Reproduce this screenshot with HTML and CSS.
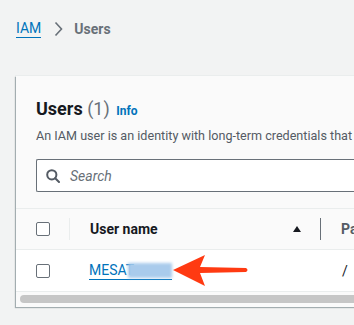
FILE: index.html
```html
<!DOCTYPE html>
<html lang="en">

<head>
    <meta charset="UTF-8">
    <meta name="viewport" content="width=device-width, initial-scale=1.0">
    <title>IAM - Users</title>
    <link rel="stylesheet" href="styles.css">
</head>

<body>
    <!-- 面包屑 -->
    <nav class="breadcrumb">
        <a class="crumb-link" href="#">IAM</a>
        <svg class="crumb-sep" width="9" height="16" viewBox="0 0 9 16">
            <path d="M1.5 1.5 L7.5 8 L1.5 14.5" fill="none" stroke="#687078" stroke-width="1.6" />
        </svg>
        <span class="crumb-current">Users</span>
    </nav>

    <div class="card">
        <div class="card-header">
            <h2>Users <span class="count">(1)</span> <a class="info" href="#">Info</a></h2>
            <p class="desc">An IAM user is an identity with long-term credentials that is used to interact with AWS in an account.</p>
            <div class="search">
                <svg width="14" height="14" viewBox="0 0 14 14">
                    <circle cx="5.8" cy="5.8" r="4.6" fill="none" stroke="#545b64" stroke-width="2" />
                    <path d="M9.2 9.2 L13 13" stroke="#545b64" stroke-width="2" stroke-linecap="round" />
                </svg>
                <span class="placeholder">Search</span>
            </div>
        </div>

        <div class="table">
            <div class="row head">
                <div class="cell check"><span class="box"></span></div>
                <div class="cell name sep-light">
                    <span>User name</span>
                    <svg width="8" height="6" viewBox="0 0 8 6"><path d="M0 6 L4 0 L8 6 Z" fill="#16191f" /></svg>
                </div>
                <div class="cell path sep-dark">Pa</div>
            </div>
            <div class="row body">
                <div class="cell check"><span class="box"></span></div>
                <div class="cell name">
                    <a class="user-link" href="#">MESAT<span class="blur"></span></a>
                </div>
                <div class="cell path">/</div>
            </div>
        </div>

        <div class="scroll"><div class="thumb"></div></div>
    </div>

    <!-- 红色箭头标注 -->
    <svg class="arrow" width="80" height="34" viewBox="0 0 80 34">
        <path d="M1 16 L33 1 L28 13 L74 14 Q77 16 74 18 L28 19 L33 32 Z" fill="#ff3a12" />
    </svg>
</body>

</html>
```

FILE: styles.css
```css
body {
    margin: 0;
    width: 354px;
    height: 325px;
    overflow: hidden;
    position: relative;
    font-family: Roboto, "Noto Sans", Arial, sans-serif;
    background-color: #f2f3f3;
    color: #16191f;
}

.breadcrumb {
    display: flex;
    align-items: center;
    gap: 11px;
    height: 20px;
    padding: 19px 16px 0;
    font-size: 14px;
}

.crumb-link {
    color: #0073bb;
    text-decoration: none;
    border-bottom: 1px solid #0073bb;
    line-height: 17px;
}

.crumb-sep {
    margin-left: 2px;
}

.crumb-current {
    color: #687078;
    font-weight: bold;
}

.card {
    margin: 37px 0 0 16px;
    width: 380px;
    background-color: #fafafa;
    box-shadow: -1px 1px 1px rgba(0, 28, 36, 0.3), 0 0 0 1px #eaeded;
    padding-bottom: 4px;
}

.card-header {
    padding: 21px 0 16px 20px;
}

h2 {
    margin: 0;
    font-size: 18px;
    line-height: 24px;
    font-weight: bold;
}

.count {
    color: #687078;
    font-weight: normal;
}

.info {
    margin-left: 2px;
    font-size: 12px;
    color: #0073bb;
    text-decoration: none;
}

.desc {
    margin: 5px 0 0;
    font-size: 12.6px;
    line-height: 16px;
    color: #545b64;
    white-space: nowrap;
}

.search {
    display: flex;
    align-items: center;
    gap: 10px;
    margin-top: 15px;
    height: 31px;
    padding-left: 9px;
    border: 1px solid #687078;
    border-right: none;
    border-radius: 2px 0 0 2px;
    background-color: #fff;
}

.placeholder {
    font-size: 14px;
    font-style: italic;
    color: #687078;
}

.row {
    display: grid;
    grid-template-columns: 33px 251px 100px;
    padding-left: 20px;
    border-top: 1px solid #eaeded;
    align-items: center;
}

.row.head {
    height: 40px;
    font-weight: bold;
    font-size: 14px;
}

.row.body {
    height: 41px;
    background-color: #fff;
    border-bottom: 1px solid #eaeded;
    font-size: 14px;
}

.cell {
    display: flex;
    align-items: center;
    height: 22px;
}

.box {
    width: 12px;
    height: 12px;
    border: 1px solid #687078;
    border-radius: 2px;
    background-color: #fff;
}

.name {
    padding-left: 20px;
    padding-right: 19px;
    justify-content: space-between;
}

.path {
    padding-left: 20px;
}

.row.body .path {
    padding-left: 22px;
}

.sep-light {
    border-left: 1px solid #eaeded;
}

.sep-dark {
    border-left: 1px solid #687078;
    color: #545b64;
}

.user-link {
    color: #0073bb;
    text-decoration: none;
    border-bottom: 1px solid #0073bb;
    line-height: 17px;
    display: inline-flex;
    align-items: center;
}

.blur {
    display: inline-block;
    width: 44px;
    height: 15px;
    margin-left: -6px;
    background-color: #a9cbec;
    filter: blur(1.5px);
}

.scroll {
    padding: 3px 0 0 4px;
}

.thumb {
    height: 8px;
    border-radius: 4px;
    background-color: #c6c6c6;
}

.arrow {
    position: absolute;
    left: 172px;
    top: 254px;
}
```
